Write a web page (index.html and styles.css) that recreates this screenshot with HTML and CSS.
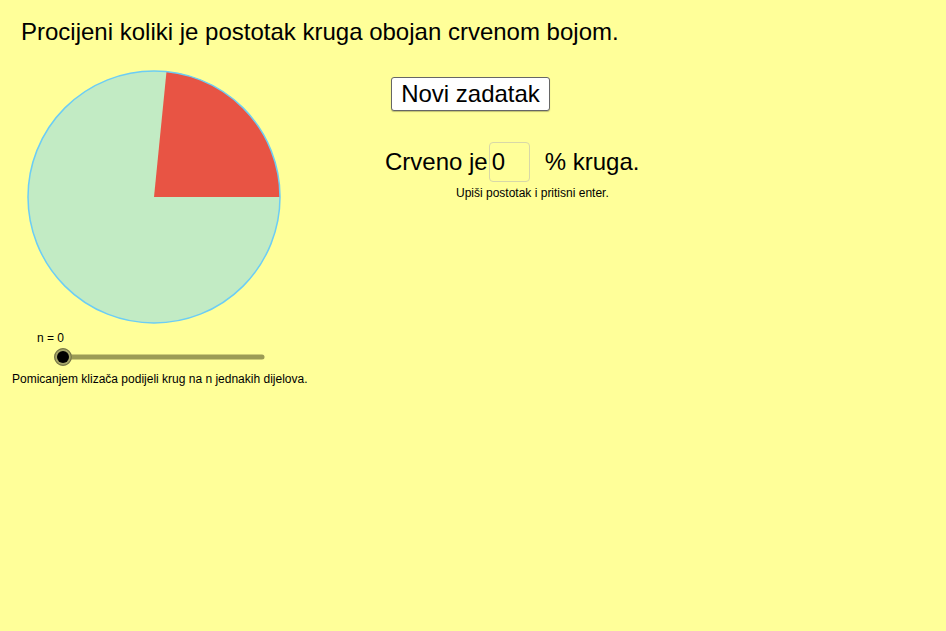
FILE: index.html
```html
<!DOCTYPE html>
<html lang="hr">
<head>
<meta charset="utf-8">
<title>Postotak kruga</title>
<link rel="stylesheet" href="styles.css">
</head>
<body>
<div class="app">
  <h1 class="title">Procijeni koliki je postotak kruga obojan crvenom bojom.</h1>
  <div class="main">
    <div class="left">
      <svg class="pie" width="256" height="256" viewBox="0 0 256 256">
        <circle cx="128" cy="128" r="126" fill="#C2EBC4"/>
        <path d="M128 128 L254 128 A126 126 0 0 0 140.5 2.6 Z" fill="#E85444"/>
        <circle cx="128" cy="128" r="126" fill="none" stroke="#6CCDF5" stroke-width="1.5"/>
      </svg>
      <div class="n-label">n = 0</div>
      <svg class="slider" width="220" height="20" viewBox="0 0 220 20">
        <line x1="11" y1="10" x2="210" y2="10" stroke="#9C9C55" stroke-width="5" stroke-linecap="round"/>
        <circle cx="11" cy="10" r="9" fill="#A6A66A"/>
        <circle cx="11" cy="10" r="8.3" fill="none" stroke="#6F6F40" stroke-width="1"/>
        <circle cx="11" cy="10" r="6" fill="#000"/>
      </svg>
      <p class="caption">Pomicanjem klizača podijeli krug na n jednakih dijelova.</p>
    </div>
    <div class="right">
      <button class="btn" type="button">Novi zadatak</button>
      <div class="answer">
        <span>Crveno je</span>
        <span class="input">0</span>
        <span class="after">% kruga.</span>
      </div>
      <p class="hint">Upiši postotak i pritisni enter.</p>
    </div>
  </div>
</div>
</body>
</html>
```
FILE: styles.css
```css
html, body {
  margin: 0;
  padding: 0;
  background: #FFFF99;
}
body {
  width: 946px;
  height: 631px;
  overflow: hidden;
  font-family: "Liberation Sans", Arial, sans-serif;
  color: #000;
}
.app {
  display: flex;
  flex-direction: column;
}
.title {
  margin: 0;
  padding: 18px 0 0 21px;
  font-size: 24px;
  font-weight: normal;
  line-height: 28px;
}
.main {
  display: flex;
}
.left {
  width: 385px;
  display: flex;
  flex-direction: column;
}
.pie {
  display: block;
  margin: 23px 0 0 26px;
}
.n-label {
  margin: 6px 0 0 37px;
  font-size: 12px;
  line-height: 14px;
}
.slider {
  display: block;
  margin: 2px 0 0 52px;
}
.caption {
  margin: 5px 0 0 12px;
  font-size: 12px;
  line-height: 14px;
}
.right {
  display: flex;
  flex-direction: column;
  align-items: flex-start;
}
.btn {
  margin: 31px 0 0 6px;
  width: 159px;
  height: 34px;
  padding: 0;
  background: #fff;
  border: 1px solid #666;
  border-radius: 3px;
  box-shadow: 0 1px 1px rgba(0,0,0,0.25);
  font-family: "Liberation Sans", Arial, sans-serif;
  font-size: 24px;
  line-height: 32px;
  color: #000;
}
.answer {
  margin-top: 31px;
  display: flex;
  align-items: center;
  font-size: 24px;
  line-height: 28px;
}
.input {
  box-sizing: border-box;
  width: 41px;
  height: 40px;
  margin-left: 1px;
  padding-left: 2px;
  border: 1px solid #D8D8A8;
  border-radius: 4px;
  display: flex;
  align-items: center;
}
.after {
  margin-left: 15px;
}
.hint {
  margin: 4px 0 0 71px;
  font-size: 12px;
  line-height: 14px;
}
```
